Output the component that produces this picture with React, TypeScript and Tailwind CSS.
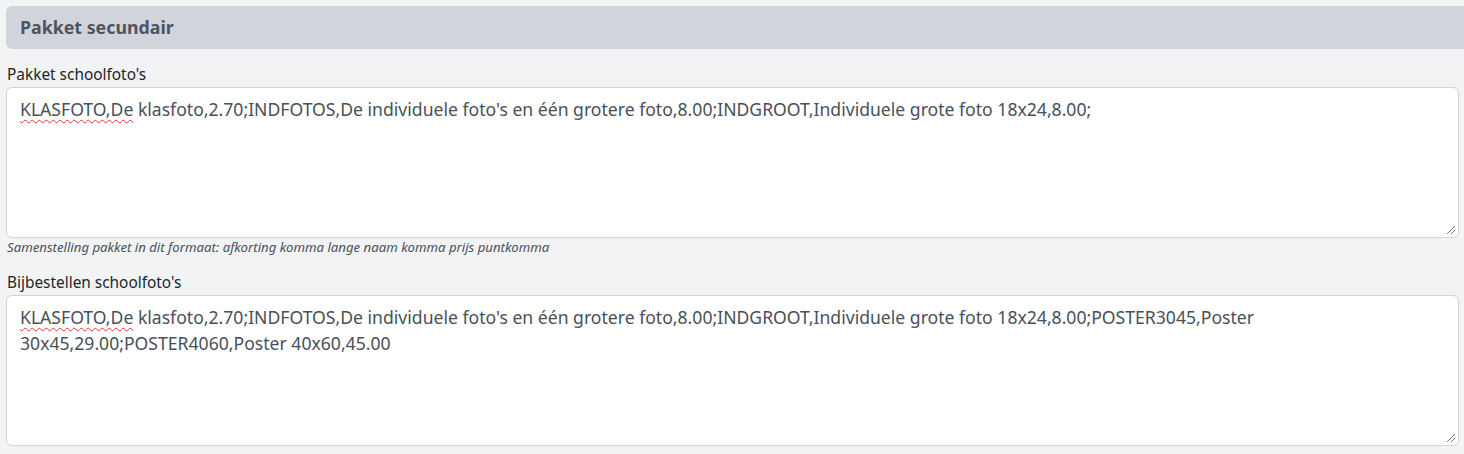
export default function App() {
  const pakket =
    "klasfoto,2.70;INDFOTOS,De individuele foto's en één grotere foto,8.00;INDGROOT,Individuele grote foto 18x24,8.00;";
  const bijbestellen =
    "klasfoto,2.70;INDFOTOS,De individuele foto's en één grotere foto,8.00;INDGROOT,Individuele grote foto 18x24,8.00;POSTER3045,Poster 30x45,29.00;POSTER4060,Poster 40x60,45.00";

  return (
    <div className="min-h-screen bg-[#f2f3f5] pt-[6px] pl-[6px] overflow-hidden font-['Noto_Sans',sans-serif]">
      {/* accordion header */}
      <div className="h-[43px] w-[1480px] rounded-md bg-[#d1d5db] flex items-center justify-between pl-[14px] pr-[14px]">
        <span className="text-[17.8px] font-bold text-[#4b5563]">Pakket secundair</span>
        <svg width="12" height="8" viewBox="0 0 12 8" className="-mr-[6px]">
          <path d="M1 1l5 5 5-5" fill="none" stroke="#4b5563" strokeWidth="2" />
        </svg>
      </div>

      <div className="pr-[5px]">
        {/* pakket */}
        <div className="mt-[15px] text-[15.4px] leading-[22px] text-[#212529] pl-px">Pakket schoolfoto's</div>
        <Field text={pakket} />
        <div className="mt-px text-[13.2px] italic leading-4 text-[#495057] pl-px">
          Samenstelling pakket in dit formaat: afkorting komma lange naam komma prijs puntkomma
        </div>

        {/* bijbestellen */}
        <div className="mt-[17px] text-[15.4px] leading-[22px] text-[#212529] pl-px">Bijbestellen schoolfoto's</div>
        <Field text={bijbestellen} />
      </div>
    </div>
  );
}

function Field({ text }: { text: string }) {
  return (
    <div className="relative mt-px h-[151px] rounded-md border border-[#ced4da] bg-white pl-[13px] pr-[40px] pt-[8px] text-[17.6px] leading-[26.4px] text-[#495057]">
      <span className="underline decoration-wavy decoration-[#e03131] decoration-1 underline-offset-[3px]">
        KLASFOTO,De
      </span>{" "}
      {text}
      <svg width="10" height="10" viewBox="0 0 10 10" className="absolute right-[2px] bottom-[2px]">
        <path d="M9 1L1 9M9 5L5 9" stroke="#777" strokeWidth="1" />
      </svg>
    </div>
  );
}
